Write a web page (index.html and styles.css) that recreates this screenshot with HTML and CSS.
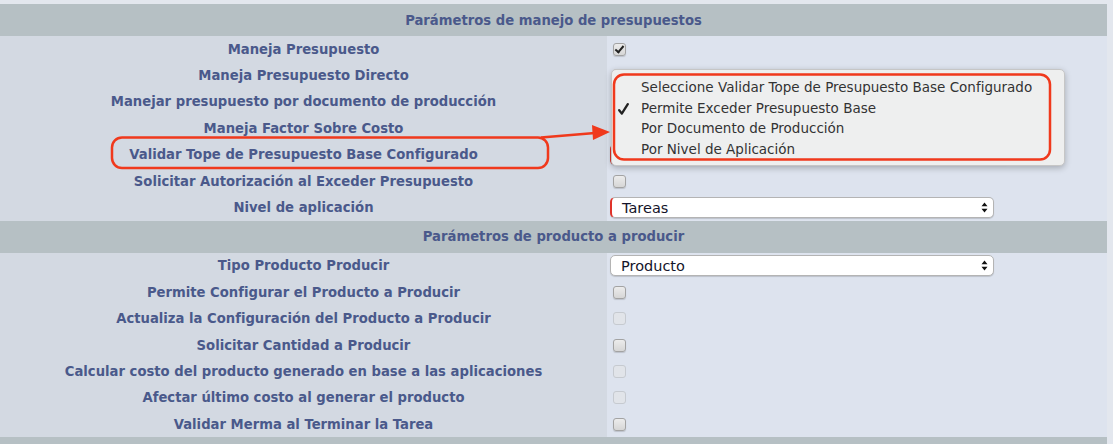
FILE: index.html
```html
<!DOCTYPE html>
<html lang="es">
<head>
<meta charset="utf-8">
<title>Parámetros</title>
<link rel="stylesheet" href="styles.css">
</head>
<body>
<div class="page">
  <div class="form">
    <div class="section-title">Parámetros de manejo de presupuestos</div>
    <div class="row"><div class="label">Maneja Presupuesto</div><div class="value"><input class="cb" type="checkbox" checked></div></div>
    <div class="row"><div class="label">Maneja Presupuesto Directo</div><div class="value"><input class="cb" type="checkbox"></div></div>
    <div class="row"><div class="label">Manejar presupuesto por documento de producción</div><div class="value"><input class="cb" type="checkbox"></div></div>
    <div class="row"><div class="label">Maneja Factor Sobre Costo</div><div class="value"><input class="cb" type="checkbox"></div></div>
    <div class="row"><div class="label">Validar Tope de Presupuesto Base Configurado</div><div class="value"><div class="select required wide"><span class="sel-text">Permite Exceder Presupuesto Base</span><svg class="arrows" width="7" height="11" viewBox="0 0 7 11"><path d="M3.5 0.5 L6.5 4.2 L0.5 4.2 Z M3.5 10.5 L6.5 6.8 L0.5 6.8 Z" fill="#111"/></svg></div></div></div>
    <div class="row"><div class="label">Solicitar Autorización al Exceder Presupuesto</div><div class="value"><input class="cb" type="checkbox"></div></div>
    <div class="row"><div class="label">Nivel de aplicación</div><div class="value"><div class="select required"><span class="sel-text">Tareas</span><svg class="arrows" width="7" height="11" viewBox="0 0 7 11"><path d="M3.5 0.5 L6.5 4.2 L0.5 4.2 Z M3.5 10.5 L6.5 6.8 L0.5 6.8 Z" fill="#111"/></svg></div></div></div>

    <div class="section-title">Parámetros de producto a producir</div>
    <div class="row"><div class="label">Tipo Producto Producir</div><div class="value"><div class="select"><span class="sel-text">Producto</span><svg class="arrows" width="7" height="11" viewBox="0 0 7 11"><path d="M3.5 0.5 L6.5 4.2 L0.5 4.2 Z M3.5 10.5 L6.5 6.8 L0.5 6.8 Z" fill="#111"/></svg></div></div></div>
    <div class="row"><div class="label">Permite Configurar el Producto a Producir</div><div class="value"><input class="cb" type="checkbox"></div></div>
    <div class="row"><div class="label">Actualiza la Configuración del Producto a Producir</div><div class="value"><input class="cb" type="checkbox" disabled></div></div>
    <div class="row"><div class="label">Solicitar Cantidad a Producir</div><div class="value"><input class="cb" type="checkbox"></div></div>
    <div class="row"><div class="label">Calcular costo del producto generado en base a las aplicaciones</div><div class="value"><input class="cb" type="checkbox" disabled></div></div>
    <div class="row"><div class="label">Afectar último costo al generar el producto</div><div class="value"><input class="cb" type="checkbox" disabled></div></div>
    <div class="row"><div class="label">Validar Merma al Terminar la Tarea</div><div class="value"><input class="cb" type="checkbox"></div></div>
    <div class="section-title"></div>
  </div>

  <ul class="popup">
    <li>Seleccione Validar Tope de Presupuesto Base Configurado</li>
    <li class="checked"><svg class="tick" width="11" height="12" viewBox="0 0 11 12"><path d="M1.2 7.2 L3.8 10.6 L9.8 1.2" fill="none" stroke="#222" stroke-width="2.3" stroke-linecap="round" stroke-linejoin="round"/></svg>Permite Exceder Presupuesto Base</li>
    <li>Por Documento de Producción</li>
    <li>Por Nivel de Aplicación</li>
  </ul>

  <svg class="annot" width="1113" height="444" viewBox="0 0 1113 444">
    <rect x="112" y="137.5" width="436" height="30.5" rx="10" ry="10" fill="none" stroke="#f0391c" stroke-width="2.5"/>
    <rect x="614" y="74.5" width="436" height="85" rx="10" ry="10" fill="none" stroke="#f0391c" stroke-width="2.5"/>
    <line x1="541" y1="137.5" x2="595" y2="133" stroke="#f0391c" stroke-width="2.5"/>
    <polygon points="610,132 592,125 593,140" fill="#f0391c"/>
  </svg>
</div>
</body>
</html>
```

FILE: styles.css
```css
html, body {
  margin: 0;
  padding: 0;
  background: #e3e7ee;
}

.page {
  position: relative;
  width: 1113px;
  height: 444px;
  overflow: hidden;
  padding-top: 4px;
  box-sizing: border-box;
  background: #e3e7ee;
  font-family: "DejaVu Sans", Verdana, sans-serif;
}

.form {
  width: 1107px;
}

.section-title {
  height: 32px;
  background: #b6c0c4;
  color: #4a598b;
  font-weight: bold;
  font-size: 13.2px;
  display: flex;
  align-items: center;
  justify-content: center;
}

.row {
  display: grid;
  grid-template-columns: 607px 1fr;
  height: 26.4px;
}

.label {
  background: #d3d9e2;
  color: #4a598b;
  font-weight: bold;
  font-size: 13.2px;
  display: flex;
  align-items: center;
  justify-content: center;
  white-space: nowrap;
}

.value {
  background: #dde3ee;
  display: flex;
  align-items: center;
  padding-left: 3px;
}

.cb {
  -webkit-appearance: none;
  appearance: none;
  width: 13px;
  height: 13px;
  margin: 0 0 0 3px;
  border: 1px solid #a3a3a3;
  border-radius: 3px;
  background: linear-gradient(#ececec, #d6d6d6);
  box-shadow: 0 1px 1px rgba(0, 0, 0, 0.15);
  box-sizing: border-box;
  position: relative;
}

.cb:checked::after {
  content: "";
  position: absolute;
  left: 3px;
  top: 0px;
  width: 3px;
  height: 7px;
  border: solid #222;
  border-width: 0 2px 2px 0;
  transform: rotate(40deg);
}

.cb:disabled {
  border-color: #c6cad0;
  background: #e1e4e9;
  box-shadow: none;
}

.select {
  width: 384px;
  height: 21px;
  box-sizing: border-box;
  background: #fff;
  border: 1px solid #b4b4b4;
  border-radius: 5px;
  box-shadow: 0 1px 1px rgba(0, 0, 0, 0.15);
  display: flex;
  align-items: center;
  justify-content: space-between;
  padding: 0 5px 0 10px;
  font-size: 14.5px;
  color: #14142a;
}

.select.wide {
  width: 400px;
}

.select.required {
  border-left: 2px solid #e0332a;
}

.arrows {
  flex: none;
}

.popup {
  position: absolute;
  left: 611px;
  top: 69px;
  width: 454px;
  height: 97px;
  margin: 0;
  padding: 7px 0 0 0;
  list-style: none;
  box-sizing: border-box;
  background: #eeefef;
  border: 1px solid #c6c6c6;
  border-radius: 5px;
  box-shadow: 0 2px 6px rgba(0, 0, 0, 0.25);
  font-size: 13.5px;
  color: #333;
}

.popup li {
  height: 20.6px;
  line-height: 20.6px;
  padding-left: 29px;
  position: relative;
  white-space: nowrap;
}

.tick {
  position: absolute;
  left: 6px;
  top: 5px;
}

.annot {
  position: absolute;
  left: 0;
  top: 0;
  pointer-events: none;
}
```
